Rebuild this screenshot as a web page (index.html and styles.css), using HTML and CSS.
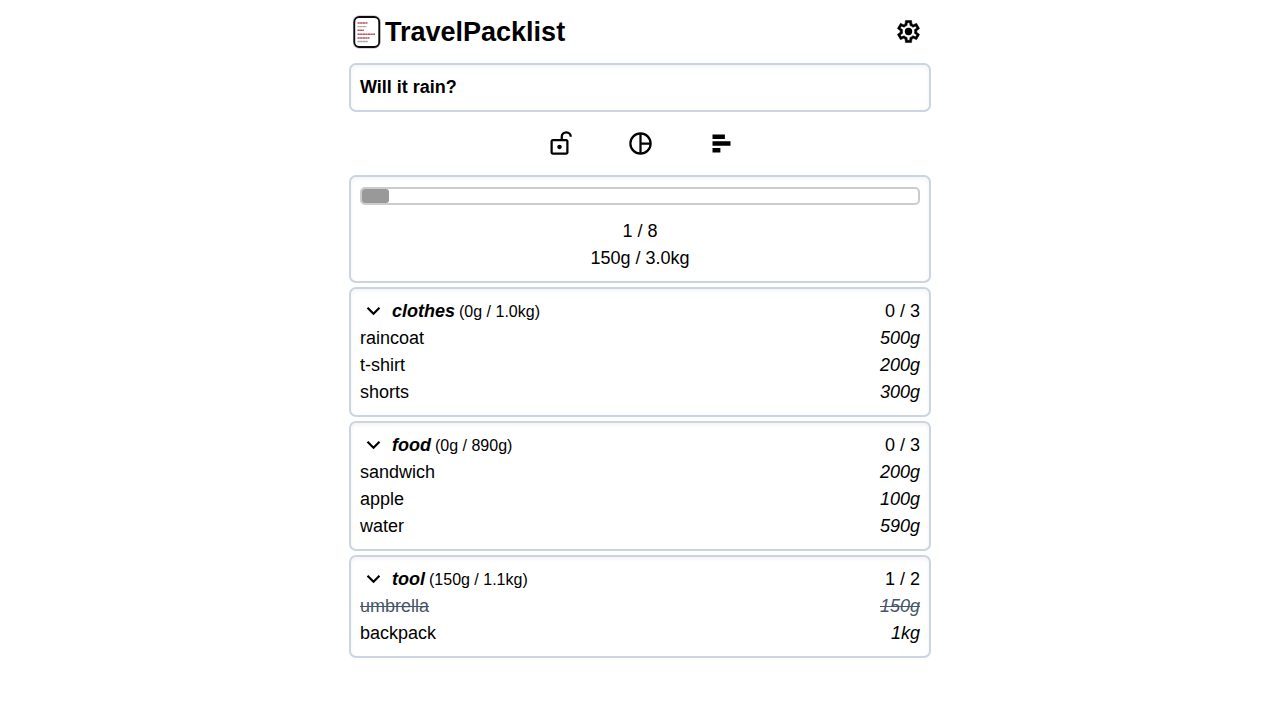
FILE: index.html
```html
<!DOCTYPE html>
<html lang="en">
<head>
<meta charset="utf-8">
<meta name="viewport" content="width=device-width, initial-scale=1">
<title>TravelPacklist</title>
<link rel="stylesheet" href="styles.css">
</head>
<body>
<div class="page">
  <header class="header">
    <div class="brand">
      <svg class="logo" viewBox="0 0 28 34" aria-hidden="true">
        <rect x="1" y="1.700" width="25.500" height="30.600" rx="5.500" fill="#fff" stroke="#ccc" stroke-width="3"/>
        <rect x="1.300" y="2" width="24.900" height="30" rx="5" fill="#fff" stroke="#0c0c10" stroke-width="1.800"/>
        <g fill="none" stroke-width="1.500" stroke-dasharray="2.300 .3">
          <path d="M4.500 8h10M4.500 15.300h6.500M4.500 19.200h17.500M4.500 22.900h12" stroke="#b5545c"/>
          <path d="M4.500 11.700h9M4.500 26.500h10.500" stroke="#a3a3a3" stroke-width="1.300"/>
        </g>
      </svg>
      <h1 class="title">TravelPacklist</h1>
    </div>
    <button class="icon-button" type="button" aria-label="Settings">
      <svg class="icon" viewBox="-9 -969 978 978"><path stroke="#000" stroke-width="18" stroke-linejoin="round" d="m370-80-16-128q-13-5-24.500-12T307-235l-119 50L78-375l103-78q-1-7-1-13.500v-27q0-6.500 1-13.500L78-585l110-190 119 50q11-8 23-15t24-12l16-128h220l16 128q13 5 24.500 12t22.500 15l119-50 110 190-103 78q1 7 1 13.500v27q0 6.500-2 13.500l103 78-110 190-118-50q-11 8-23 15t-24 12L590-80H370Zm70-80h79l14-106q31-8 57.500-23.500T639-327l99 41 39-68-86-65q5-14 7-29.500t2-31.500q0-16-2-31.500t-7-29.500l86-65-39-68-99 42q-22-23-48.500-38.500T533-694l-13-106h-79l-14 106q-31 8-57.500 23.500T321-633l-99-41-39 68 86 64q-5 15-7 30t-2 32q0 16 2 31t7 30l-86 65 39 68 99-42q22 23 48.500 38.500T427-266l13 106Z"/><circle cx="480" cy="-480" r="134"/></svg>
    </button>
  </header>

  <main>
    <section class="card question"><h2 class="question-text">Will it rain?</h2></section>

    <div class="toolbar">
      <button class="icon-button" type="button" aria-label="Unlock">
        <svg class="icon" viewBox="0 -960 960 960"><path d="M240-160h480v-400H240v400Zm240-120q33 0 56.500-23.500T560-360q0-33-23.500-56.500T480-440q-33 0-56.500 23.500T400-360q0 33 23.500 56.500T480-280ZM240-80q-33 0-56.500-23.500T160-160v-400q0-33 23.500-56.500T240-640h280v-80q0-83 58.500-141.500T720-920q83 0 141.500 58.500T920-720h-80q0-50-35-85t-85-35q-50 0-85 35t-35 85v80h120q33 0 56.500 23.500T800-560v400q0 33-23.500 56.500T720-80H240Z"/></svg>
      </button>
      <button class="icon-button" type="button" aria-label="Chart">
        <svg class="icon" viewBox="0 0 24 24"><path d="M12 3v18M12 12h9" fill="none" stroke="#000" stroke-width="2"/><circle cx="12" cy="12" r="9" fill="none" stroke="#000" stroke-width="2"/></svg>
      </button>
      <button class="icon-button" type="button" aria-label="Sort">
        <svg class="icon" viewBox="0 0 24 24"><path d="M4 4h11v4H4zM4 10h16v4H4zM4 16h7v4H4z"/></svg>
      </button>
    </div>

    <div class="stack">
      <section class="card summary">
        <progress class="progress" value="150" max="3040" aria-label="Packed weight"></progress>
        <p class="line">1 / 8</p>
        <p class="line">150g / 3.0kg</p>
      </section>

      <section class="card">
        <div class="row">
          <div class="group">
            <button class="icon-button" type="button" aria-label="Collapse clothes"><svg class="icon" viewBox="0 -960 960 960"><path d="M480-344 240-584l56-56 184 184 184-184 56 56-240 240Z"/></svg></button>
            <h2 class="name">clothes</h2><span class="total">(0g / 1.0kg)</span>
          </div>
          <span>0 / 3</span>
        </div>
        <ul class="items">
          <li class="row"><span>raincoat</span><span class="weight">500g</span></li>
          <li class="row"><span>t-shirt</span><span class="weight">200g</span></li>
          <li class="row"><span>shorts</span><span class="weight">300g</span></li>
        </ul>
      </section>

      <section class="card">
        <div class="row">
          <div class="group">
            <button class="icon-button" type="button" aria-label="Collapse food"><svg class="icon" viewBox="0 -960 960 960"><path d="M480-344 240-584l56-56 184 184 184-184 56 56-240 240Z"/></svg></button>
            <h2 class="name">food</h2><span class="total">(0g / 890g)</span>
          </div>
          <span>0 / 3</span>
        </div>
        <ul class="items">
          <li class="row"><span>sandwich</span><span class="weight">200g</span></li>
          <li class="row"><span>apple</span><span class="weight">100g</span></li>
          <li class="row"><span>water</span><span class="weight">590g</span></li>
        </ul>
      </section>

      <section class="card">
        <div class="row">
          <div class="group">
            <button class="icon-button" type="button" aria-label="Collapse tool"><svg class="icon" viewBox="0 -960 960 960"><path d="M480-344 240-584l56-56 184 184 184-184 56 56-240 240Z"/></svg></button>
            <h2 class="name">tool</h2><span class="total">(150g / 1.1kg)</span>
          </div>
          <span>1 / 2</span>
        </div>
        <ul class="items">
          <li class="row packed"><span>umbrella</span><span class="weight">150g</span></li>
          <li class="row"><span>backpack</span><span class="weight">1kg</span></li>
        </ul>
      </section>
    </div>
  </main>
</div>
</body>
</html>
```
FILE: styles.css
```css
* {
  box-sizing: border-box;
  margin: 0;
  padding: 0;
}

body {
  background: #fff;
  color: #000;
  font: 18px/27px "Liberation Sans", Arial, sans-serif;
}

.page {
  max-width: 582px;
  margin: 0 auto;
}

.header {
  display: flex;
  align-items: center;
  justify-content: space-between;
  padding: 12px 9px 12px 4px;
}

.brand {
  display: flex;
  align-items: center;
  gap: 4px;
}

.logo {
  display: block;
  width: 28px;
  height: 34px;
}

.title {
  padding-top: 2px;
  font-size: 27px;
  line-height: 37px;
}

.icon-button {
  display: block;
  border: 0;
  background: none;
  cursor: pointer;
}

.icon {
  display: block;
  width: 27px;
  height: 27px;
}

.card {
  padding: 9px;
  border: 2px solid #cbd5e1;
  border-radius: 7px;
  box-shadow: inset 0 2px 4px rgba(0, 0, 0, 0.05);
}

.question-text {
  font-size: 18px;
}

.toolbar {
  display: flex;
  justify-content: center;
  gap: 54px;
  padding: 18px 0;
}

.stack {
  display: flex;
  flex-direction: column;
  gap: 4px;
}

.summary {
  padding-top: 10px;
  text-align: center;
}

.progress {
  display: block;
  width: 100%;
  height: 18px;
  margin-bottom: 13px;
  border: 2px solid #ccc;
  border-radius: 5px;
  background: #fff;
  appearance: none;
}

.progress::-webkit-progress-bar {
  background: transparent;
}

.progress::-webkit-progress-value {
  border-radius: 3px;
  background: #999;
}

.row {
  display: flex;
  justify-content: space-between;
}

.group {
  display: flex;
  align-items: center;
}

.name {
  align-self: baseline;
  margin: 0 4px 0 5px;
  font-size: 18px;
  font-style: italic;
}

.total {
  align-self: baseline;
  font-size: 16px;
  line-height: 24px;
}

.items {
  list-style: none;
}

.weight {
  font-style: italic;
}

.packed {
  color: #475569;
  text-decoration: line-through;
}
```
